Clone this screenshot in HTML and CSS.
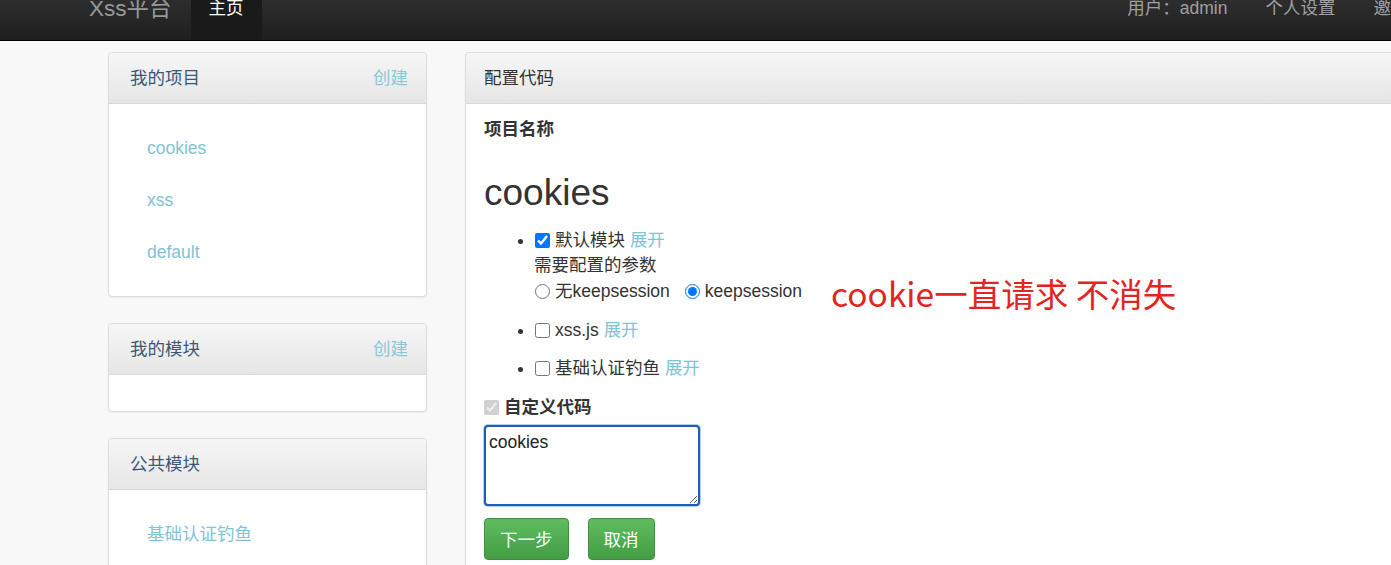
FILE: index.html
```html
<!DOCTYPE html>
<html lang="zh-CN">
<head>
<meta charset="utf-8">
<title>Xss平台</title>
<link rel="stylesheet" href="styles.css">
</head>
<body>
<header class="navbar">
  <div class="nav-left">
    <span class="brand">Xss平台</span>
    <span class="nav-item active">主页</span>
  </div>
  <div class="nav-right">
    <span class="nav-item">用户：admin</span>
    <span class="nav-item">个人设置</span>
    <span class="nav-item">邀请码</span>
  </div>
</header>

<div class="page">
  <aside class="sidebar">
    <section class="panel">
      <div class="panel-head"><span class="head-title">我的项目</span><span class="head-link">创建</span></div>
      <ul class="side-list">
        <li>cookies</li>
        <li>xss</li>
        <li>default</li>
      </ul>
    </section>
    <section class="panel">
      <div class="panel-head"><span class="head-title">我的模块</span><span class="head-link">创建</span></div>
      <ul class="side-list"></ul>
    </section>
    <section class="panel">
      <div class="panel-head"><span class="head-title">公共模块</span></div>
      <ul class="side-list">
        <li>基础认证钓鱼</li>
      </ul>
    </section>
  </aside>

  <main class="panel main-panel">
    <div class="panel-head main-head">配置代码</div>
    <div class="main-body">
      <div class="label-strong">项目名称</div>
      <h1 class="project-name">cookies</h1>
      <ul class="module-list">
        <li>
          <label class="check"><input type="checkbox" checked>默认模块</label> <span class="link">展开</span>
          <div>需要配置的参数</div>
          <div class="radios">
            <label class="radio"><input type="radio" name="ks">无keepsession</label>
            <label class="radio"><input type="radio" name="ks" checked>keepsession</label>
          </div>
        </li>
        <li><label class="check"><input type="checkbox">xss.js</label> <span class="link">展开</span></li>
        <li><label class="check"><input type="checkbox">基础认证钓鱼</label> <span class="link">展开</span></li>
      </ul>
      <label class="custom"><input type="checkbox" checked disabled>自定义代码</label>
      <textarea class="code">cookies</textarea>
      <div class="actions">
        <button class="btn">下一步</button>
        <button class="btn">取消</button>
      </div>
      <div class="note">cookie一直请求 不消失</div>
    </div>
  </main>
</div>
</body>
</html>
```

FILE: styles.css
```css
html, body {
  margin: 0;
  padding: 0;
}
body {
  width: 1391px;
  height: 565px;
  overflow: hidden;
  background: #f8f8f8;
  font-family: "Liberation Sans", "Noto Sans CJK SC", sans-serif;
  font-size: 17.5px;
  line-height: 25px;
  color: #333;
}

.navbar {
  height: 40px;
  background: linear-gradient(#2d2d2d, #1f1f1f);
  border-bottom: 1px solid #000;
  display: flex;
  justify-content: space-between;
  width: 1500px;
}
.nav-left, .nav-right {
  display: flex;
  align-items: stretch;
}
.nav-left {
  padding-left: 89px;
}
.nav-right {
  margin-right: 55px;
}
.brand {
  font-size: 22.5px;
  line-height: 17px;
  color: #999;
  margin-right: 19px;
}
.nav-item {
  line-height: 16px;
  color: #a0a0a0;
  padding: 0 19px;
}
.nav-item.active {
  color: #fff;
  background: #1a1a1a;
  padding: 0 18px;
}

.page {
  display: flex;
  align-items: flex-start;
  gap: 38px;
  padding: 11px 0 0 108px;
  width: 1500px;
}

.sidebar {
  width: 319px;
  display: flex;
  flex-direction: column;
  gap: 26px;
  flex: none;
}
.panel {
  background: #fff;
  border: 1px solid #ddd;
  border-radius: 4px;
  box-shadow: 0 1px 2px rgba(0,0,0,0.06);
  overflow: hidden;
}
.panel-head {
  height: 50px;
  line-height: 50px;
  padding: 0 18px 0 21px;
  background: linear-gradient(#f6f6f6, #e6e6e6);
  border-bottom: 1px solid #d8d8d8;
  display: flex;
  justify-content: space-between;
}
.head-title {
  color: #3b5877;
}
.head-link {
  color: #8ac8d6;
}
.side-list {
  list-style: none;
  margin: 0;
  padding: 18px 0;
}
.side-list li {
  padding: 13.5px 38px;
  color: #7fc3d4;
}

.main-panel {
  width: 1000px;
  flex: none;
  border-right: none;
  border-radius: 4px 0 0 4px;
}
.main-head {
  padding-left: 18px;
  color: #333;
}
.main-body {
  position: relative;
  padding: 13px 18px 40px 18px;
}
.label-strong {
  font-weight: bold;
}
.project-name {
  font-size: 37px;
  font-weight: normal;
  line-height: 40px;
  margin: 31px 0 15px 0;
}
.module-list {
  margin: 0 0 1px 0;
  padding-left: 50px;
}
.module-list li {
  margin-bottom: 13.5px;
}
.module-list li::marker {
  font-size: 16px;
}
.check input, .custom input, .radio input {
  width: 15px;
  height: 15px;
  margin: 0 5px 0 1px;
  vertical-align: -2px;
}
.radios {
  display: flex;
  gap: 14px;
  line-height: 26px;
}
.link {
  color: #7fc3d4;
}
.custom {
  display: block;
  font-weight: bold;
}
.custom input {
  margin-left: 0;
}
.code {
  display: block;
  box-sizing: border-box;
  width: 216px;
  height: 81px;
  margin: 5px 0 12px 0;
  padding: 3px 3px;
  font-family: "Liberation Sans", sans-serif;
  font-size: 17.5px;
  line-height: 25px;
  color: #222;
  border: 2px solid #1d5fb4;
  border-radius: 4px;
  box-shadow: 0 0 0 1px #a9d0f0;
  outline: none;
}
.actions {
  display: flex;
  gap: 19px;
}
.btn {
  height: 42px;
  padding: 0 15px;
  font-family: "Liberation Sans", "Noto Sans CJK SC", sans-serif;
  font-size: 17.5px;
  color: #fff;
  background: linear-gradient(#5ebd5e, #449d44);
  border: 1px solid #3e8f3e;
  border-radius: 4px;
}
.note {
  position: absolute;
  left: 365px;
  top: 169px;
  font-family: "Noto Sans CJK SC", sans-serif;
  font-size: 33.5px;
  line-height: 40px;
  color: #e3241f;
}
```
